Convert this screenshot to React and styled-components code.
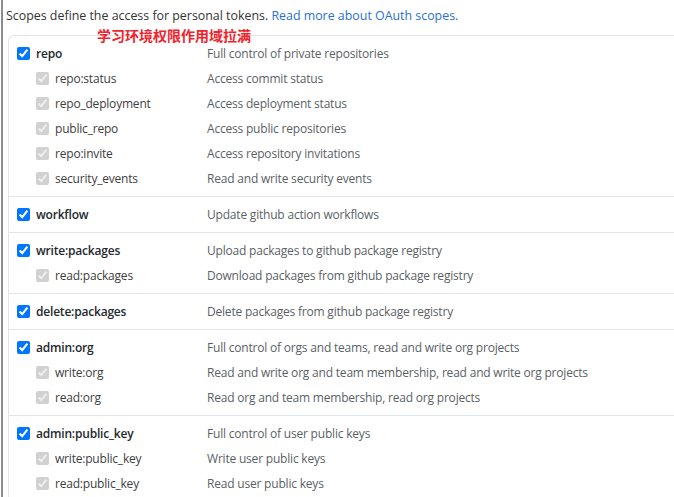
import React from "react";
import styled, { createGlobalStyle } from "styled-components";

const Global = createGlobalStyle`
  html, body { margin: 0; padding: 0; background: #fff; }
  body { font-family: "Open Sans", "Noto Sans", "Liberation Sans", sans-serif; }
`;

const Frame = styled.div`
  position: relative;
  margin-left: 1px;
  border-left: 2px solid #8c8c8c;
  min-height: 497px;
  padding-left: 3px;
  box-sizing: border-box;
`;

const Intro = styled.p`
  margin: 0;
  padding-top: 7px;
  height: 28px;
  box-sizing: border-box;
  font-size: 12.4px;
  line-height: 18px;
  color: #333;
`;

const Link = styled.a`
  color: #2a6fd6;
  text-decoration: none;
`;

const Note = styled.div`
  position: absolute;
  left: 94px;
  top: 26px;
  font-family: "Noto Sans CJK SC", sans-serif;
  font-weight: 700;
  font-size: 14px;
  line-height: 18px;
  color: #f2222a;
  z-index: 2;
`;

const Box = styled.div`
  margin-left: 2px;
  margin-top: 7px;
  border: 1px solid #e1e4e8;
  border-right: none;
  border-radius: 6px 0 0 6px;
`;

const Group = styled.div`
  padding: 5px 0;
  border-top: ${(p) => (p.$first ? "none" : "1px solid #e1e4e8")};
`;

const Row = styled.div`
  display: grid;
  grid-template-columns: 198px 1fr;
  align-items: center;
  height: 25px;
  font-size: 12px;
  letter-spacing: -0.2px;
  white-space: nowrap;
`;

const LabelCell = styled.label`
  display: flex;
  align-items: center;
  gap: 6px;
  padding-left: ${(p) => (p.$sub ? "27px" : "8px")};
  color: ${(p) => (p.$sub ? "#3d3d3d" : "#24292e")};
  font-weight: ${(p) => (p.$sub ? 400 : 600)};
`;

const Check = styled.input`
  margin: 0;
  width: 13px;
  height: 13px;
  flex: none;
`;

const Desc = styled.span`
  color: #5a5f66;
`;

const groups = [
  [
    ["repo", "Full control of private repositories"],
    ["repo:status", "Access commit status"],
    ["repo_deployment", "Access deployment status"],
    ["public_repo", "Access public repositories"],
    ["repo:invite", "Access repository invitations"],
    ["security_events", "Read and write security events"],
  ],
  [["workflow", "Update github action workflows"]],
  [
    ["write:packages", "Upload packages to github package registry"],
    ["read:packages", "Download packages from github package registry"],
  ],
  [["delete:packages", "Delete packages from github package registry"]],
  [
    ["admin:org", "Full control of orgs and teams, read and write org projects"],
    ["write:org", "Read and write org and team membership, read and write org projects"],
    ["read:org", "Read org and team membership, read org projects"],
  ],
  [
    ["admin:public_key", "Full control of user public keys"],
    ["write:public_key", "Write user public keys"],
    ["read:public_key", "Read user public keys"],
  ],
];

export default function App() {
  return (
    <>
      <Global />
      <Frame>
        <Intro>
          Scopes define the access for personal tokens.{" "}
          <Link href="#">Read more about OAuth scopes.</Link>
        </Intro>
        <Note>学习环境权限作用域拉满</Note>
        <Box>
          {groups.map((g, gi) => (
            <Group key={gi} $first={gi === 0}>
              {g.map(([name, desc], ri) => (
                <Row key={name}>
                  <LabelCell $sub={ri > 0}>
                    <Check type="checkbox" checked readOnly disabled={ri > 0} />
                    {name}
                  </LabelCell>
                  <Desc>{desc}</Desc>
                </Row>
              ))}
            </Group>
          ))}
        </Box>
      </Frame>
    </>
  );
}
